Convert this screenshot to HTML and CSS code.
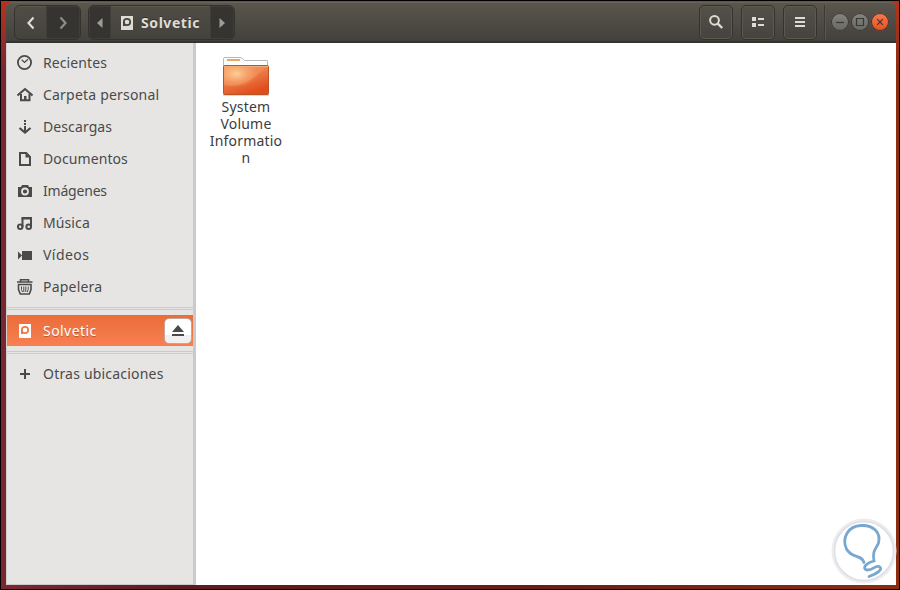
FILE: index.html
```
<!DOCTYPE html>
<html lang="es">

<head>
    <meta charset="UTF-8">
    <meta name="viewport" content="width=device-width, initial-scale=1.0">
    <title>Solvetic</title>
    <link rel="stylesheet" href="styles.css">
</head>

<body>
    <div class="desktop">
        <div class="window">
            <header class="titlebar">
                <div class="group nav">
                    <button class="back"><svg width="16" height="16" viewBox="0 0 16 16"><path d="M10.5 2.500 L5.500 8 L10.500 13.500" /></svg></button>
                    <button class="forward dark"><svg width="16" height="16" viewBox="0 0 16 16"><path d="M5.500 2.500 L10.500 8 L5.500 13.500" /></svg></button>
                </div>
                <div class="group path">
                    <button class="arrow dark"><svg width="6" height="10" viewBox="0 0 6 10"><path d="M5.5 0v10L0 5z" /></svg></button>
                    <button class="crumb">
                        <svg width="12" height="14" viewBox="0 0 12 14"><path fill="#dfdbd2" d="M0 0h12v14H0z" /><circle cx="6" cy="6" r="3.2" fill="none" stroke="#45433e" stroke-width="1.7" /><path fill="#45433e" d="M2 6h2v4H2z" /></svg>
                        <span>Solvetic</span>
                    </button>
                    <button class="arrow dark"><svg width="6" height="10" viewBox="0 0 6 10"><path d="M.5 0v10L6 5z" /></svg></button>
                </div>
                <div class="tools">
                    <button class="tool"><svg width="16" height="16" viewBox="0 0 16 16"><circle cx="6.5" cy="6.3" r="4.4" fill="none" stroke="#dfdbd2" stroke-width="2" /><path d="M9.8 9.6l4.4 4.4" stroke="#dfdbd2" stroke-width="2.4" /></svg></button>
                    <button class="tool"><svg width="16" height="16" viewBox="0 0 16 16"><path fill="#dfdbd2" d="M2 3h4v4H2zM2 9h4v4H2zM8 4h6v2H8zM8 10h6v2H8z" /></svg></button>
                    <button class="tool"><svg width="16" height="16" viewBox="0 0 16 16"><path fill="#dfdbd2" d="M3 3h10v2H3zM3 7h10v2H3zM3 11h10v2H3z" /></svg></button>
                </div>
                <div class="controls">
                    <button class="ctl"><svg width="18" height="18" viewBox="0 0 18 18"><path d="M5 9.5h8" /></svg></button>
                    <button class="ctl"><svg width="18" height="18" viewBox="0 0 18 18"><path d="M5.5 5.5h7v7h-7z" /></svg></button>
                    <button class="ctl close"><svg width="18" height="18" viewBox="0 0 18 18"><path d="M6.2 6.2l5.6 5.6M11.8 6.2l-5.6 5.6" /></svg></button>
                </div>
            </header>

            <div class="content">
                <nav class="sidebar">
                    <a class="place">
                        <svg width="16" height="16" viewBox="0 0 16 16"><circle cx="7.500" cy="7.500" r="6.600" fill="none" stroke="#4a4a4a" stroke-width="1.8" /><path d="M4.700 4.800L7.500 7.500L11 4.200" fill="none" stroke="#4a4a4a" stroke-width="1.2" /></svg>
                        <span>Recientes</span>
                    </a>
                    <a class="place">
                        <svg width="16" height="16" viewBox="0 0 16 16"><path d="M.5 8.500L8 2L15.500 8.500" fill="none" stroke="#4a4a4a" stroke-width="2" /><path d="M4 7v6.200h8.500V7" fill="none" stroke="#4a4a4a" stroke-width="2" /><path fill="#4a4a4a" d="M7 9h2.500v4H7z" /></svg>
                        <span class="wide">Carpeta personal</span>
                    </a>
                    <a class="place">
                        <svg width="16" height="16" viewBox="0 0 16 16"><path fill="#4a4a4a" d="M7 1h2v2H7zM7 4h2v2H7zM7 7h2v5H7z" /><path d="M2.500 9L8 13.500L13.500 9" fill="none" stroke="#4a4a4a" stroke-width="2.2" /></svg>
                        <span>Descargas</span>
                    </a>
                    <a class="place">
                        <svg width="16" height="16" viewBox="0 0 16 16"><path d="M3 2h6.200L13 5.800V14H3z" fill="none" stroke="#4a4a4a" stroke-width="2" /><path fill="#4a4a4a" d="M8.500 2l4.500 4.500H8.500z" /></svg>
                        <span>Documentos</span>
                    </a>
                    <a class="place">
                        <svg width="16" height="16" viewBox="0 0 16 16"><path fill="#4a4a4a" d="M1 4h3l1-2h6l1 2h3v10H1z" /><circle cx="8" cy="8.500" r="3" fill="#4a4a4a" stroke="#e6e5e3" stroke-width="1.8" /></svg>
                        <span class="tight">Imágenes</span>
                    </a>
                    <a class="place">
                        <svg width="16" height="16" viewBox="0 0 16 16"><path d="M5.500 12V3M14 3v9" fill="none" stroke="#4a4a4a" stroke-width="2" /><path fill="#4a4a4a" d="M4.500 2H15v2.500H4.500z" /><circle cx="3.200" cy="11.700" r="2.300" fill="none" stroke="#4a4a4a" stroke-width="2" /><circle cx="11.700" cy="11.700" r="2.300" fill="none" stroke="#4a4a4a" stroke-width="2" /></svg>
                        <span>Música</span>
                    </a>
                    <a class="place">
                        <svg width="16" height="16" viewBox="0 0 16 16"><path fill="#4a4a4a" d="M5 4h10v9H5zM1 4.500v8L5 8.500z" /></svg>
                        <span class="wider">Vídeos</span>
                    </a>
                    <a class="place">
                        <svg width="16" height="16" viewBox="0 0 16 16"><path d="M3.500 2.500V.8h8v1.700M0 3h15.500" fill="none" stroke="#4a4a4a" stroke-width="1.500" /><path d="M.8 5.500h14M1.500 5.500v5l1.800 4.500h9l1.700-4.500v-5" fill="none" stroke="#4a4a4a" stroke-width="1.600" /><path d="M4.500 7.500v3l1 2.500M6.800 7.500v5.500M8.800 7.500v5.500M11.200 7.500v3l-1 2.500" fill="none" stroke="#4a4a4a" /></svg>
                        <span class="wide">Papelera</span>
                    </a>
                    <hr>
                    <a class="place active">
                        <svg width="16" height="16" viewBox="0 0 16 16"><path fill="#fff" d="M2 1h12v14H2z" /><circle cx="8" cy="7" r="3.200" fill="none" stroke="#f07746" stroke-width="1.700" /><path fill="#f07746" d="M4 7h2v4H4z" /></svg>
                        <span class="wider">Solvetic</span>
                        <button class="eject"><svg width="14" height="12" viewBox="0 0 14 12"><path fill="#4a4a4a" d="M7 0L13 7H1zM1 9h12v2H1z" /></svg></button>
                    </a>
                    <hr>
                    <a class="place">
                        <svg width="16" height="16" viewBox="0 0 16 16"><path fill="#4a4a4a" d="M7 3h2v4h4v2H9v4H7V9H3V7h4z" /></svg>
                        <span class="wide">Otras ubicaciones</span>
                    </a>
                </nav>

                <main class="files">
                    <div class="file">
                        <svg width="48" height="42" viewBox="0 0 48 42">
                            <defs>
                                <linearGradient id="front" x1="0" y1="0" x2="0.5" y2="1">
                                    <stop offset="0" stop-color="#f09a5c" />
                                    <stop offset="0.5" stop-color="#ec7c48" />
                                    <stop offset="1" stop-color="#e04e1c" />
                                </linearGradient>
                                <radialGradient id="shine" cx="0.28" cy="0.28" r="0.5">
                                    <stop offset="0" stop-color="#ffd9a4" stop-opacity="0.85" />
                                    <stop offset="1" stop-color="#ffb070" stop-opacity="0" />
                                </radialGradient>
                            </defs>
                            <path fill="#00000026" d="M1 39h46v2H1z" />
                            <path fill="#fdfdfd" stroke="#b8b8b8" d="M1.500 14V3.500Q1.500 2.500 3 2.500H18Q20 2.500 22.500 5.500H45.500V14" />
                            <path stroke="#eba568" stroke-width="2" d="M5 5h13" />
                            <rect x="1.500" y="10.500" width="45" height="29" rx="1.500" fill="url(#front)" stroke="#bd5324" />
                            <path fill="#f6a26a" fill-opacity="0.35" d="M2 11h44L34 21Q18 34 2 30z" />
                            <rect x="2" y="11" width="44" height="28" fill="url(#shine)" />
                            <path stroke="#f4ad7c" d="M2 11.500h44" />
                        </svg>
                        <div class="name">System<br>Volume<br>Informatio<br>n</div>
                    </div>
                </main>
            </div>
        </div>

        <div class="badge">
            <svg width="66" height="66" viewBox="0 0 66 66">
                <circle cx="33" cy="33" r="32.500" fill="#ededee" />
                <circle cx="33" cy="33" r="29.500" fill="#fff" stroke="#dddfe8" stroke-width="1.500" />
                <path d="M33 44.500C30.500 36 21 41 15.500 31C10.500 20 17 8 30 7.500C43 7 50 15 47.500 25C45 31 41 33 43 43C35 45 30.500 50.500 36 52C42 52.500 44 47 48 48.500C53 51 46 55.500 38 58.500" fill="none" stroke="#78a7cf" stroke-width="2.800" stroke-linecap="round" />
            </svg>
        </div>
    </div>
</body>

</html>
```

FILE: styles.css
```
* {
    margin: 0;
    padding: 0;
    box-sizing: border-box;
    font-family: "Noto Sans", "Open Sans", sans-serif;
}

body {
    overflow: hidden;
}

.desktop {
    position: relative;
    width: 900px;
    height: 590px;
    border: 1px solid #000;
    padding: 1px 3px 4px 5px;
    background: linear-gradient(#b8321c, rgba(140, 40, 25, 0) 70px), linear-gradient(90deg, #7b2733 0, #5e1a20 20%, #6a1e18 60%, #8a2d12 100%);
}

.window {
    height: 583px;
    width: 890px;
    display: flex;
    flex-direction: column;
}

.titlebar {
    height: 41px;
    display: flex;
    padding: 2px 7px 0 8px;
    background: linear-gradient(#5a564d, #43413c);
    border-top: 1px solid #686359;
    border-bottom: 2px solid #343331;
    border-radius: 6px 6px 0 0;
}

button {
    display: flex;
    align-items: center;
    justify-content: center;
    border: none;
    background: none;
}

.group {
    display: flex;
    height: 35px;
    border: 1px solid #33322f;
    border-radius: 6px;
    background: linear-gradient(#504d46, #44423d);
    overflow: hidden;
    box-shadow: inset 0 1px #5c5850;
}

.nav {
    width: 67px;
    margin-right: 7px;
}

.nav .back {
    width: 31px;
}

.nav .forward {
    width: 34px;
}

.nav path {
    fill: none;
    stroke: #dfdbd2;
    stroke-width: 2.2;
}

.nav .forward path {
    stroke: #8f8c86;
}

.dark {
    background: #353431;
    box-shadow: inset 0 0 0 1px #403e3a;
}

.path {
    width: 147px;
}

.arrow {
    width: 22px;
    flex: none;
}

.arrow:last-child {
    width: 24px;
}

.arrow path {
    fill: #a09d96;
}

.crumb {
    flex: 1;
    gap: 8px;
    font-size: 14px;
    font-weight: bold;
    color: #dfdbd2;
    letter-spacing: 0.55px;
    text-shadow: 0 -1px #33322f;
}

.crumb span {
    margin-top: -1px;
}

.tools {
    display: flex;
    gap: 8px;
    height: 35px;
    margin-left: auto;
    padding-right: 7px;
}

.tool {
    width: 34px;
    border: 1px solid #33322f;
    border-radius: 5px;
    background: linear-gradient(#54514a, #45433e);
    box-shadow: inset 0 0 0 1px #5c5951;
}

.tool svg {
    margin-top: -1px;
}

.controls {
    display: flex;
    align-items: center;
    gap: 2px;
    height: 34px;
    padding-left: 6px;
    border-left: 1px solid #3c3a36;
    box-shadow: inset 1px 0 #5b584f;
}

.ctl {
    width: 18px;
    height: 18px;
    border-radius: 50%;
    background: linear-gradient(#858580, #686863);
    box-shadow: inset 0 0 0 1px #383733;
}

.ctl path {
    fill: none;
    stroke: #383733;
    stroke-width: 1.2;
}

.close {
    background: linear-gradient(#f67b52, #e94e1b);
}

.content {
    display: flex;
    flex: 1;
}

.sidebar {
    width: 190px;
    padding-top: 4px;
    background: #e6e5e3;
    border-left: 1px solid #d2d0cd;
    border-right: 3px solid #cbcaca;
    border-bottom: 1px solid #cbcaca;
}

.place {
    display: flex;
    align-items: center;
    height: 32px;
    padding-left: 10px;
    gap: 10px;
    font-size: 14px;
    color: #4a4a4a;
    letter-spacing: 0.1px;
    white-space: nowrap;
}

.place span {
    margin-top: -2px;
}

.wide {
    letter-spacing: 0.2px;
}

.wider {
    letter-spacing: 0.45px;
}

.tight {
    letter-spacing: -0.2px;
}

.sidebar hr {
    height: 3px;
    border: none;
    border-top: 1px solid #cbcaca;
    border-bottom: 1px solid #cbcaca;
    margin: 4px 0 5px;
}

.active {
    height: 31px;
    padding-right: 1px;
    color: #fff;
    background: linear-gradient(#ea6c39, #f98052);
    text-shadow: 0 1px #b95a35;
}

.active span {
    margin-top: 0;
}

.active + hr {
    margin: 5px 0 4px;
}

.eject {
    width: 28px;
    height: 26px;
    margin-left: auto;
    border: 1px solid #c9a595;
    border-radius: 5px;
    background: linear-gradient(#fff 65%, #f0f0f0 66%);
}

.files {
    flex: 1;
    padding: 12px 9px;
    background: #fff;
}

.file {
    width: 82px;
    display: flex;
    flex-direction: column;
    align-items: center;
}

.name {
    margin-top: 1px;
    font-size: 14px;
    line-height: 17px;
    letter-spacing: 0.2px;
    text-align: center;
    color: #3c3c3c;
}

/* watermark over the corner of the window */
.badge {
    position: absolute;
    right: 2px;
    bottom: 5px;
    height: 66px;
}
```
